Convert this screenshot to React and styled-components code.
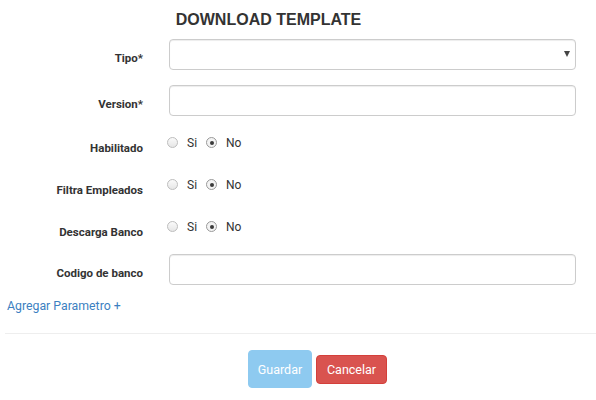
import styled, {createGlobalStyle} from "styled-components";
import {useState} from "react";

const GlobalStyle = createGlobalStyle`
    body {
        margin: 0;
        background: #fff;
        font-family: Roboto, "Liberation Sans", Arial, sans-serif;
        color: #333;
    }
`;

const radioFields = [
    {key: "habilitado", label: "Habilitado", mb: 15},
    {key: "filtra", label: "Filtra Empleados", mb: 15},
    {key: "descarga", label: "Descarga Banco", mb: 12},
];

const App = () => {

    const [values, setValues] = useState({habilitado: "no", filtra: "no", descarga: "no"});

    const handleRadioChange = (key, value) => {
        setValues({...values, [key]: value});
    };

    return (
        <Wrapper>
            <GlobalStyle />
            <Title>DOWNLOAD TEMPLATE</Title>
            <form onSubmit={(e) => e.preventDefault()}>
                <FormRow mb={15}>
                    <Label>Tipo*</Label>
                    <SelectBox>
                        <Select defaultValue="">
                            <option value=""></option>
                        </Select>
                    </SelectBox>
                </FormRow>

                <FormRow mb={15}>
                    <Label>Version*</Label>
                    <TextInput type="text" name="version" />
                </FormRow>

                {radioFields.map((field) => (
                    <FormRow key={field.key} mb={field.mb}>
                        <Label top={9}>{field.label}</Label>
                        <RadioGroup>
                            <RadioLabel>
                                <Radio
                                    type="radio"
                                    name={field.key}
                                    checked={values[field.key] === "si"}
                                    onChange={() => handleRadioChange(field.key, "si")}
                                />
                                Si
                            </RadioLabel>
                            <RadioLabel>
                                <Radio
                                    type="radio"
                                    name={field.key}
                                    checked={values[field.key] === "no"}
                                    onChange={() => handleRadioChange(field.key, "no")}
                                />
                                No
                            </RadioLabel>
                        </RadioGroup>
                    </FormRow>
                ))}

                <FormRow mb={12}>
                    <Label>Codigo de banco</Label>
                    <TextInput type="text" name="codigo" />
                </FormRow>

                <AddLink href="#">Agregar Parametro +</AddLink>

                <Divider />

                <Actions>
                    <Button type="submit" variant="save" disabled>Guardar</Button>
                    <Button type="button" variant="cancel">Cancelar</Button>
                </Actions>
            </form>
        </Wrapper>
    )
}

export default App;

const Wrapper = styled.div`
    width: 596px;
    height: 400px;
    overflow: hidden;
`;

const Title = styled.h3`
    margin: 10px 0 9px;
    padding-right: 59px;
    text-align: center;
    font-family: "Liberation Sans", Arial, sans-serif;
    font-size: 16px;
    line-height: 20px;
    font-weight: 700;
    color: #333;
`;

const FormRow = styled.div`
    display: grid;
    grid-template-columns: 143px 1fr;
    column-gap: 26px;
    padding-right: 20px;
    margin-bottom: ${(p) => p.mb}px;
`;

const Label = styled.label`
    text-align: right;
    font-size: 11.5px;
    line-height: 16px;
    font-weight: 700;
    padding-top: ${(p) => p.top ?? 11}px;
    color: #333;
`;

const TextInput = styled.input`
    box-sizing: border-box;
    height: 31px;
    width: 100%;
    border: 1px solid #ccc;
    border-radius: 4px;
    box-shadow: inset 0 1px 1px rgba(0, 0, 0, 0.075);
    padding: 5px 10px;
    font-size: 13px;
    font-family: inherit;
    outline: none;
`;

const SelectBox = styled.div`
    position: relative;

    &::after {
        content: "";
        position: absolute;
        right: 6px;
        top: 12px;
        border-left: 3.5px solid transparent;
        border-right: 3.5px solid transparent;
        border-top: 6px solid #444;
        pointer-events: none;
    }
`;

const Select = styled.select`
    box-sizing: border-box;
    appearance: none;
    height: 31px;
    width: 100%;
    border: 1px solid #ccc;
    border-radius: 4px;
    background: #fff;
    box-shadow: inset 0 1px 1px rgba(0, 0, 0, 0.075);
    font-family: inherit;
    outline: none;
`;

const RadioGroup = styled.div`
    box-sizing: border-box;
    display: flex;
    align-items: flex-start;
    gap: 11px;
    padding-top: 4px;
    height: 27px;
`;

const RadioLabel = styled.label`
    display: flex;
    align-items: center;
    font-size: 12px;
    line-height: 16px;
    color: #333;
    cursor: pointer;
`;

const Radio = styled.input`
    appearance: none;
    box-sizing: border-box;
    width: 11px;
    height: 11px;
    margin: 0 9px 1px -2px;
    border: 1px solid #bdbdbd;
    border-radius: 50%;
    background: linear-gradient(#fafafa, #e6e6e6);
    position: relative;

    &:checked {
        background: #f3f3f3;
        border-color: #9a9a9a;
    }

    &:checked::after {
        content: "";
        position: absolute;
        left: 2.5px;
        top: 2.5px;
        width: 4px;
        height: 4px;
        border-radius: 50%;
        background: #3a3a3a;
    }
`;

const AddLink = styled.a`
    display: block;
    margin-left: 7px;
    font-size: 12.3px;
    line-height: 18px;
    color: #3c7fc1;
    text-decoration: none;
`;

const Divider = styled.hr`
    margin: 18px 0 16px 5px;
    border: 0;
    border-top: 1px solid #eee;
`;

const Actions = styled.div`
    display: flex;
    justify-content: center;
    align-items: center;
    gap: 4px;
    padding-left: 39px;
`;

const Button = styled.button`
    box-sizing: border-box;
    border: 1px solid transparent;
    border-radius: 4px;
    font-family: inherit;
    font-size: 12.5px;
    color: #fff;
    cursor: pointer;
    padding: 0;
    width: ${(p) => (p.variant === "save" ? "64px" : "71px")};
    height: ${(p) => (p.variant === "save" ? "38px" : "29px")};
    background: ${(p) => (p.variant === "save" ? "#8ecaf0" : "#d9534f")};
    border-color: ${(p) => (p.variant === "save" ? "#8ecaf0" : "#d43f3a")};

    &:disabled {
        cursor: not-allowed;
    }
`;
